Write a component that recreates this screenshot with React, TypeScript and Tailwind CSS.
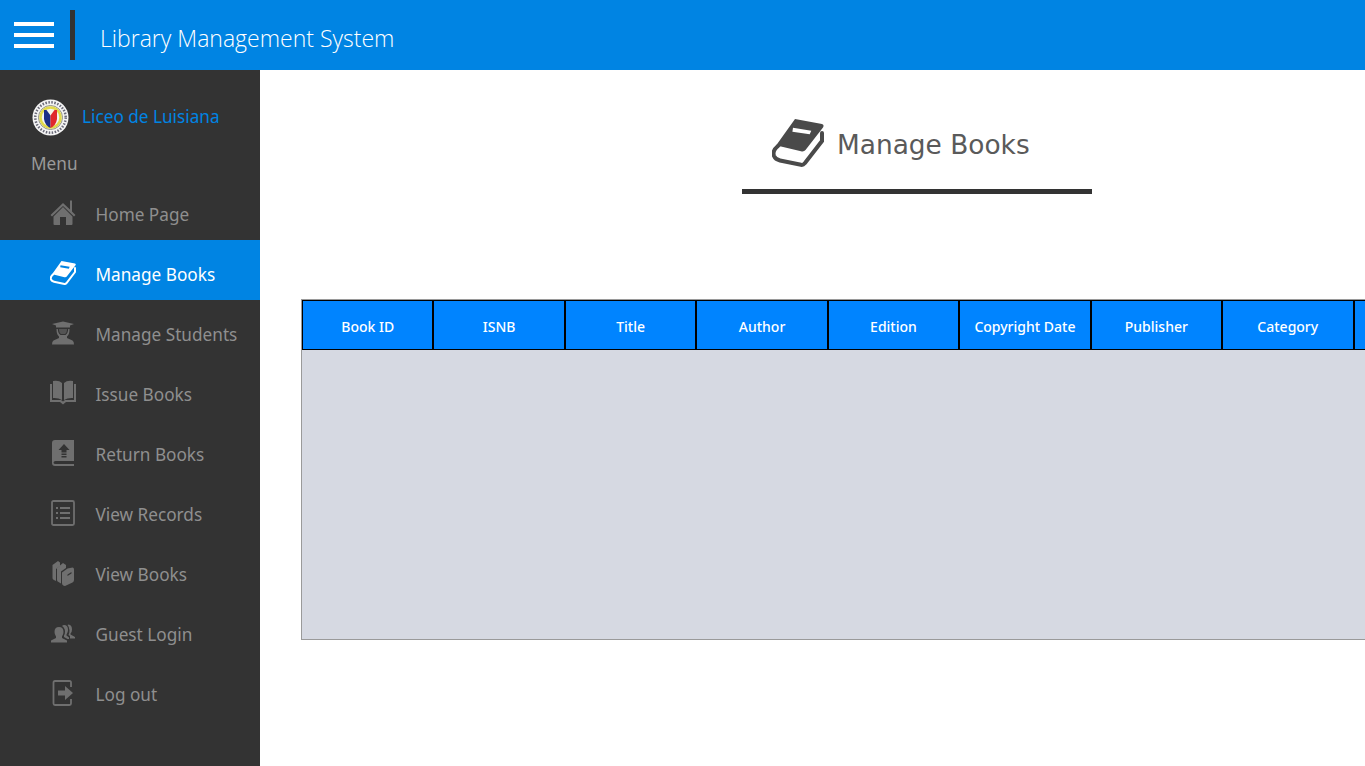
const BookIcon = ({ className }: { className: string }) => (
  <svg viewBox="0 0 52 48" className={className} fill="currentColor">
    <path
      fillRule="evenodd"
      d="M23 0 L50 5 Q52.500 6 51 8.500 L33.500 31 Q32 33 29 32.300 L9 27.500 Q6 27 4 29 L3 28 Z M21 8.700 L39.300 11.700 L37.700 15.300 L20.400 12.700 Z"
    />
    <path
      d="M6 27 Q0 32 2 37 Q3.500 40.500 8 41.500 L29 45.800 Q31 46.300 33 44 L50 22 V14"
      fill="none"
      stroke="currentColor"
      strokeWidth="4"
      strokeLinecap="round"
    />
  </svg>
);

const HomeIcon = ({ className }: { className: string }) => (
  <svg viewBox="0 0 26 26" className={className} fill="currentColor">
    <path d="M13 3 L0.500 15 L2 16.500 L13 6 L24 16.500 L25.500 15 L22 11.500 V0.500 H20 V9.500 Z" />
    <path
      fillRule="evenodd"
      d="M13 7 L3.500 16.500 V24 Q3.500 25 4.500 25 H21.500 Q22.500 25 22.500 24 V16.500 Z M10 17 H16 V25 H10 Z"
    />
  </svg>
);

const StudentIcon = ({ className }: { className: string }) => (
  <svg viewBox="0 0 24 24" className={className} fill="currentColor">
    <path d="M12 0.500 L23 3 L19 4.500 V6.500 H5 V4.500 L1 3 Z" />
    <path d="M5.500 8 H6.800 Q7 12.500 9.500 14 H14.500 Q17 12.500 17.200 8 H18.500 Q18.500 13.500 16 15.500 V17 L21.500 19.500 Q23 20.500 23 23.500 H1 Q1 20.500 2.500 19.500 L8 17 V15.500 Q5.500 13.500 5.500 8 Z" />
    <path d="M8 8 H16 Q16 12 14 13 H10 Q8 12 8 8 Z" opacity="0.55" />
  </svg>
);

const OpenBookIcon = ({ className }: { className: string }) => (
  <svg viewBox="0 0 26 26" className={className} fill="currentColor">
    <path d="M3 1 Q9 0 12 3 V20 Q8 17.500 3 18 Z M23 1 Q17 0 14 3 V20 Q18 17.500 23 18 Z" />
    <path d="M0 4 H2 V20 H11 L13 21.500 L15 20 H24 V4 H26 V22 H16 L13 24.500 L10 22 H0 Z" />
  </svg>
);

const ReturnIcon = ({ className }: { className: string }) => (
  <svg viewBox="0 0 22 26" className={className} fill="currentColor">
    <path
      fillRule="evenodd"
      d="M3 0 H22 V21 H3.500 Q1.500 21 1.500 22.500 Q1.500 24 3.500 24 H22 V26 H3 Q0 26 0 23 V3 Q0 0 3 0 Z M12 4 L6.500 10 H9.500 V12.500 H14.500 V10 H17.500 Z M9.500 13.500 V15 H14.500 V13.500 Z M9.500 16 V17.500 H14.500 V16 Z"
    />
  </svg>
);

const ListIcon = ({ className }: { className: string }) => (
  <svg viewBox="0 0 24 26" className={className} fill="none" stroke="currentColor">
    <rect x="1" y="1" width="22" height="24" rx="1.500" strokeWidth="1.800" />
    <path d="M5 8 H7 M9 8 H19 M5 13 H7 M9 13 H19 M5 18 H7 M9 18 H19" strokeWidth="1.800" />
  </svg>
);

const BooksIcon = ({ className }: { className: string }) => (
  <svg viewBox="0 0 22 26" className={className} fill="currentColor">
    <path d="M0.500 5 L6 1 L8 2.500 V6 L4 9 V21 L2 20 Q0.500 19.500 0.500 18 Z" />
    <path d="M5 8 L11 3 L14 5 V8 L9 11.500 V23.500 L6.500 22 Q5 21.500 5 20 Z" />
    <path
      fillRule="evenodd"
      d="M10 12.500 L15.500 8.500 L20.500 7.500 Q22 7.500 22 9.500 V20 Q22 21.500 20.500 22.500 L13 26 Q10 25.500 10 23 Z M15.500 14.500 L19.500 12 V13.500 L15.500 16 Z"
    />
  </svg>
);

const GuestIcon = ({ className }: { className: string }) => (
  <svg viewBox="0 0 24 19" className={className} fill="currentColor">
    <path d="M8 3 Q12.500 3 12.500 8 Q12.500 10.500 11 12.500 V14 L16 16.500 V18.500 H0 V16.500 L5 14 V12.500 Q3.500 10.500 3.500 8 Q3.500 3 8 3 Z" />
    <path d="M13 1 Q17 1 17 6 Q17 8.500 15.500 10.500 V11.500 L18 13.500 V15 L16.500 15 L13 13 V11.500 Q14 10 14 7.500 Q14 4 11 2 Q12 1 13 1 Z" />
    <path d="M17.500 0.500 Q21 1 21 5.500 Q21 8 19.500 9.500 V10.500 L24 13 V14.500 H19 V12 L17.500 11 Q18.500 9 18.500 6.500 Q18.500 3 16.500 1 Q17 0.500 17.500 0.500 Z" />
  </svg>
);

const LogoutIcon = ({ className }: { className: string }) => (
  <svg viewBox="0 0 22 26" className={className} fill="currentColor">
    <path
      d="M19 7 V2.500 Q19 1 17.500 1 H3 Q1.500 1 1.500 2.500 V23.500 Q1.500 25 3 25 H17.500 Q19 25 19 23.500 V19"
      fill="none"
      stroke="currentColor"
      strokeWidth="1.800"
    />
    <path d="M6 10.500 H13 V6 L21 13 L13 20 V15.500 H6 Z" />
  </svg>
);

const Logo = () => (
  <svg viewBox="0 0 37 37" className="h-[37px] w-[37px]">
    <circle cx="18.500" cy="18.500" r="18" fill="#f4f4f4" />
    <circle cx="18.500" cy="18.500" r="15.200" fill="none" stroke="#6a6a78" strokeWidth="2.500" strokeDasharray="1.500 1.500" />
    <circle cx="18.500" cy="18.500" r="12" fill="#f4f4f4" stroke="#77776a" strokeWidth="0.800" />
    <circle cx="18.500" cy="18.500" r="10" fill="none" stroke="#e2d94a" strokeWidth="2.500" />
    <path d="M12 11 H18.500 V29 Q13 26.500 12 20 Z" fill="#1c2f86" />
    <path d="M18.500 11 H25 V20 Q24 26.500 18.500 29 Z" fill="#e0282c" />
    <path d="M14.500 11 L18.500 16.500 L22.500 11 Z" fill="#f5f5e8" />
  </svg>
);

const menu = [
  { label: "Home Page", Icon: HomeIcon, size: "w-[26px] h-[26px]" },
  { label: "Manage Books", Icon: BookIcon, size: "w-[26px] h-[24px]", active: true },
  { label: "Manage Students", Icon: StudentIcon, size: "w-[24px] h-[24px]" },
  { label: "Issue Books", Icon: OpenBookIcon, size: "w-[26px] h-[26px]" },
  { label: "Return Books", Icon: ReturnIcon, size: "w-[22px] h-[26px]" },
  { label: "View Records", Icon: ListIcon, size: "w-[24px] h-[26px]" },
  { label: "View Books", Icon: BooksIcon, size: "w-[22px] h-[26px]" },
  { label: "Guest Login", Icon: GuestIcon, size: "w-[24px] h-[19px]" },
  { label: "Log out", Icon: LogoutIcon, size: "w-[22px] h-[26px]" },
];

const columns = [
  "Book ID",
  "ISNB",
  "Title",
  "Author",
  "Edition",
  "Copyright Date",
  "Publisher",
  "Category",
  "",
];

export default function App() {
  return (
    <div className="flex h-[766px] flex-col overflow-hidden bg-white font-['Noto_Sans',sans-serif]">
      <header className="flex h-[70px] shrink-0 items-center bg-[#0084e3]">
        <div className="ml-[14px] flex w-10 flex-col gap-[7px]">
          <span className="h-1 bg-white" />
          <span className="h-1 bg-white" />
          <span className="h-1 bg-white" />
        </div>
        <div className="ml-4 h-[50px] w-[5px] bg-[#333333]" />
        <h1 className="ml-[25px] mt-[6px] font-['Open_Sans',sans-serif] text-[23px] font-light text-white">
          Library Management System
        </h1>
      </header>

      <div className="flex min-h-0 flex-1">
        <aside className="w-[260px] shrink-0 bg-[#333333] pt-[29px]">
          <div className="flex h-[37px] items-center pl-8">
            <Logo />
            <span className="ml-[13px] -translate-y-[1px] text-[17.200px] text-[#0084e3]">Liceo de Luisiana</span>
          </div>
          <p className="mt-[15px] h-[29px] pl-[31px] text-[17.200px] leading-[26px] text-[#9a9a9a]">Menu</p>
          {menu.map(({ label, Icon, size, active }) => (
            <div
              key={label}
              className={`flex h-[60px] items-center pl-[50px] ${
                active ? "bg-[#0084e3] text-white" : "text-[#6f6f6f]"
              }`}
            >
              <div className="flex w-[26px] translate-y-[3px] items-center justify-center">
                <Icon className={size} />
              </div>
              <span
                className={`ml-[19.500px] translate-y-[5px] text-[17.200px] ${
                  active ? "text-white" : "text-[#8f8f8f]"
                }`}
              >
                {label}
              </span>
            </div>
          ))}
        </aside>

        <main className="min-w-0 flex-1 overflow-hidden pt-[49px]">
          <div className="ml-[482px] w-[350px] border-b-[5px] border-[#333333]">
            <div className="flex h-[70px] items-start pl-[30px]">
              <BookIcon className="h-[48px] w-[52px] text-[#4a4a4a]" />
              <h2 className="ml-[13px] mt-[6px] font-['DejaVu_Sans',sans-serif] text-[26.400px] text-[#5a5a5a]">
                Manage Books
              </h2>
            </div>
          </div>

          <div className="ml-[41px] mt-[105px] h-[341px] w-[1200px] border border-[#9a9a9a] bg-[#d6d9e2]">
            <div className="flex h-[50px] border border-black bg-[#0084ff]">
              {columns.map((name, i) => (
                <div
                  key={i}
                  className="flex w-[131.450px] shrink-0 items-center justify-center border-r-2 border-black pt-[2px] text-[14px] font-medium text-white"
                >
                  {name}
                </div>
              ))}
            </div>
          </div>
        </main>
      </div>
    </div>
  );
}
